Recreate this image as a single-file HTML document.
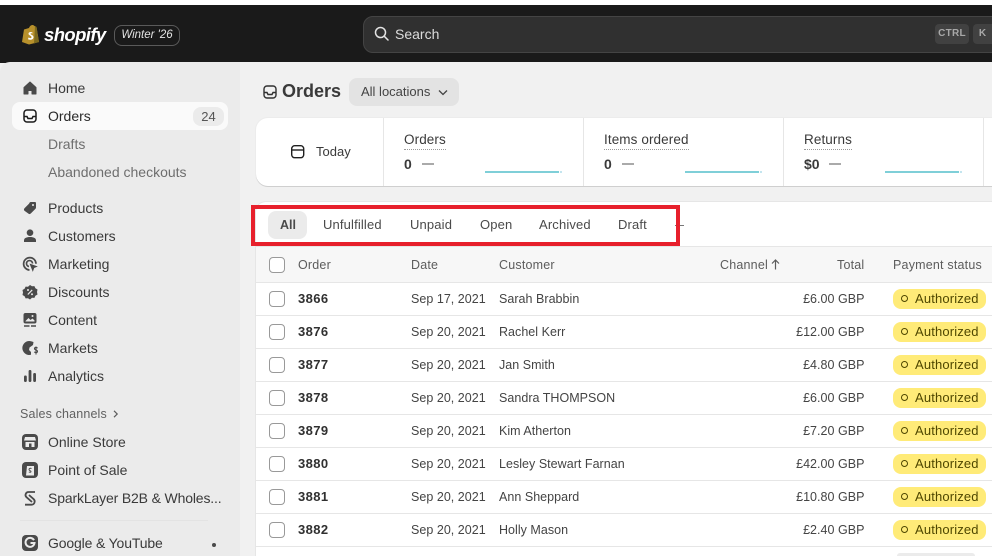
<!DOCTYPE html>
<html><head><meta charset="utf-8"><style>
html,body{margin:0;padding:0}
body{width:992px;height:556px;overflow:hidden;position:relative;background:#f1f1f1;font-family:"Liberation Sans",sans-serif;color:#303030;font-size:13px}
.a{position:absolute;white-space:nowrap}
.n{position:absolute;left:48px;height:20px;line-height:20px;font-size:14px;white-space:nowrap;color:#3a3a3a}
.s{color:#6e6e6e}
.i{position:absolute;left:21px;width:18px;height:18px}
.t{position:absolute;height:20px;line-height:20px;white-space:nowrap;font-size:13px;color:#4a4a4a;letter-spacing:.15px}
.h{position:absolute;top:255px;height:20px;line-height:20px;white-space:nowrap;font-size:12.5px;color:#5c5c5c;letter-spacing:.2px}
.r{position:absolute;left:256px;right:0;height:33px;background:#fff;border-bottom:1px solid #e6e6e6;box-sizing:border-box}
.r div{position:absolute;top:6px;height:20px;line-height:20px;white-space:nowrap;font-size:12.5px;color:#444;letter-spacing:.03px}
.r .c{left:13px;top:8px;width:14px;height:14px;border:1px solid #999;border-radius:4px;background:#fff}
.r .o{left:42px;font-weight:bold;color:#303030;font-size:13px;letter-spacing:.4px}
.r .d{left:155px}
.r .u{left:243px}
.r .m{right:127.500px}
.r .b{left:637px;top:6px;width:93px;height:20px;background:#ffeb78;border-radius:8px;color:#4f4700;line-height:20px}
.r .b i{position:absolute;left:8px;top:6px;width:5px;height:5px;border:1.5px solid #4f4700;border-radius:50%}
.r .b span{position:absolute;left:22px;font-size:13px;letter-spacing:.15px}
.lbl{position:absolute;top:131px;height:18px;line-height:18px;font-size:13.5px;color:#3a3a3a;border-bottom:1px dotted #999;letter-spacing:.1px}
.v{position:absolute;top:156px;line-height:17px;font-size:14px;font-weight:bold;color:#3a3a3a}
.ds{position:absolute;top:163px;width:12px;height:2px;background:#aaa}
.sp{position:absolute;top:171px;width:74px;height:2px;background:#7fcfd8}
.sp2{position:absolute;top:171px;width:2px;height:2px;background:#c4e5ef}
.dv{position:absolute;top:118px;width:1px;height:68px;background:#e6e6e6}
</style></head><body>
<div class="a" style="left:0;top:0;width:992px;height:5px;background:#fff"></div>
<div class="a" style="left:0;top:5px;width:992px;height:58px;background:#1a1a1a"></div>
<div class="a" style="left:0;top:62px;width:240px;height:494px;background:#ebebeb;border-top-left-radius:10px"></div>
<div class="a" style="left:240px;top:62px;width:752px;height:494px;background:#f1f1f1"></div>

<svg class="a" style="left:21px;top:24px" width="19" height="21" viewBox="0 0 19 21"><path d="M3 5.500 8 4c1-3 4-4 5.500-2l2 1 2.500 15-10 2.500L1 18z" fill="#b8912c"/><path d="M14 2l1.500 1 2.500 15-5 1.500z" fill="#7d6a1e"/><path d="M11.500 8.500c-2-1-4-.3-4 1.300 0 1.700 3 1.900 3 3.400 0 1-1.500 1.200-3 .3l-.5 1.800c2.500 1 5.500.3 5.500-2.200 0-2-3-2.300-3-3.300 0-.5 1-.8 2-.3z" fill="#fff"/></svg>
<div class="a" style="left:44px;top:21px;height:28px;line-height:28px;font-size:18.500px;font-weight:bold;font-style:italic;color:#fff;letter-spacing:-.6px">shopify</div>
<div class="a" style="left:114px;top:25px;width:64px;height:19px;border:1px solid #5a5a5a;border-radius:8px;line-height:19px;text-align:center;font-size:11.500px;font-style:italic;color:#e3e3e3">Winter '26</div>

<div class="a" style="left:363px;top:16px;width:640px;height:35px;background:#303030;border:1px solid #444;border-radius:10px"></div>
<svg class="a" style="left:374px;top:26px" width="15" height="15" viewBox="0 0 15 15" fill="none" stroke="#e3e3e3" stroke-width="1.500"><circle cx="6.500" cy="6.500" r="5"/><path d="M10.200 10.200 14 14" stroke-linecap="round"/></svg>
<div class="a" style="left:395px;top:24px;height:20px;line-height:20px;font-size:14px;color:#dcdcdc">Search</div>
<div class="a" style="left:935px;top:24px;width:34px;height:20px;background:#414141;border-radius:4px;line-height:20px;text-align:center;font-size:10px;font-weight:bold;color:#a8a8a8;letter-spacing:.3px">CTRL</div>
<div class="a" style="left:973px;top:24px;width:19px;height:20px;background:#414141;border-radius:4px 0 0 4px;line-height:20px;text-align:center;font-size:10px;font-weight:bold;color:#a8a8a8">K</div>

<!-- sidebar -->
<div class="a" style="left:12px;top:102px;width:216px;height:28px;background:#fafafa;border-radius:8px"></div>
<div class="a" style="left:193px;top:107px;width:31px;height:19px;background:#ebebeb;border-radius:8px;line-height:19px;text-align:center;font-size:13px;color:#555">24</div>

<svg class="i" style="top:79px" viewBox="0 0 18 18"><path d="M3 8.500 9 3l6 5.500V15h-4v-3.500H7V15H3z" fill="#4a4a4a" stroke="#4a4a4a" stroke-linejoin="round"/></svg>
<div class="n" style="top:78px">Home</div>
<svg class="i" style="top:107px" viewBox="0 0 18 18" fill="none" stroke="#1a1a1a" stroke-width="1.500"><rect x="3" y="3" width="12" height="12" rx="3"/><path d="M3 9.500h3l1 2h4l1-2h3"/></svg>
<div class="n" style="top:106px;color:#2a2a2a">Orders</div>
<div class="n s" style="top:134px">Drafts</div>
<div class="n s" style="top:162px">Abandoned checkouts</div>

<svg class="i" style="top:199px" viewBox="0 0 18 18"><path d="M9.500 3H14a1 1 0 0 1 1 1v4.500a2 2 0 0 1-.6 1.400l-4.500 4.500a2 2 0 0 1-2.800 0L3.600 11.900a2 2 0 0 1 0-2.800l4.500-4.500A2 2 0 0 1 9.500 3z" fill="#4a4a4a"/><circle cx="12" cy="6" r="1" fill="#ebebeb"/></svg>
<div class="n" style="top:198px">Products</div>
<svg class="i" style="top:227px" viewBox="0 0 18 18" fill="#4a4a4a"><circle cx="9" cy="5.700" r="3.300"/><path d="M3 15v-1.500C3 11 5.500 10 9 10s6 1 6 3.500V15z"/></svg>
<div class="n" style="top:226px">Customers</div>
<svg class="i" style="top:255px" viewBox="0 0 18 18" fill="none" stroke="#4a4a4a" stroke-width="1.700"><path d="M8.500 15a6.200 6.200 0 1 1 6.500-6.200"/><path d="M8 11.500a3 3 0 1 1 3.500-3"/><path d="M9 9l7 2.500-3 1.200-1.200 3.300z" fill="#4a4a4a" stroke-width=".6"/></svg>
<div class="n" style="top:254px">Marketing</div>
<svg class="i" style="top:283px" viewBox="0 0 18 18"><path d="M9 2l2 1.300 2.400-.2 1 2.200 2.100 1.200-.5 2.500.5 2.500-2.100 1.200-1 2.200-2.400-.2L9 16.500l-2-1.300-2.400.2-1-2.200-2.100-1.200.5-2.500-.5-2.500 2.100-1.200 1-2.200 2.400.2z" fill="#4a4a4a"/><path d="M6.800 11.500l4.400-4.600" stroke="#ebebeb" stroke-width="1.200"/><circle cx="7" cy="7" r="1" fill="#ebebeb"/><circle cx="11" cy="11.300" r="1" fill="#ebebeb"/></svg>
<div class="n" style="top:282px">Discounts</div>
<svg class="i" style="top:311px" viewBox="0 0 18 18"><rect x="2.500" y="2" width="13" height="10.500" rx="2" fill="#4a4a4a"/><path d="M4.500 10l3-3 2 2 2-1.500 2 2V10.500h-9z" fill="#ebebeb"/><circle cx="11.500" cy="5" r="1" fill="#ebebeb"/><path d="M3 15h5.500M10 15h5" stroke="#4a4a4a" stroke-width="1.400"/></svg>
<div class="n" style="top:310px">Content</div>
<svg class="i" style="top:339px" viewBox="0 0 18 18"><path d="M10 2.200a7 7 0 1 0 0 13.600V13l-2-2 .5-2.500L12 6l.5-3z" fill="#4a4a4a"/><path d="M16.500 9.200c-.5-1-3-1.200-3 .4 0 1.700 3 1 3 2.800 0 1.600-2.600 1.400-3.200.4M15 7.500v8" stroke="#4a4a4a" stroke-width="1.100" fill="none"/></svg>
<div class="n" style="top:338px">Markets</div>
<svg class="i" style="top:367px" viewBox="0 0 18 18" fill="#4a4a4a"><rect x="3" y="8.500" width="2.800" height="6.500" rx="1.200"/><rect x="7.600" y="3" width="2.800" height="12" rx="1.200"/><rect x="12.200" y="6" width="2.800" height="9" rx="1.200"/></svg>
<div class="n" style="top:366px">Analytics</div>

<div class="a" style="left:20px;top:404px;height:20px;line-height:20px;font-size:12.500px;color:#616161;letter-spacing:.15px">Sales channels</div>
<svg class="a" style="left:112px;top:410px" width="7" height="8" viewBox="0 0 7 8" fill="none" stroke="#5a5a5a" stroke-width="1.200"><path d="M2 .8 5.200 4 2 7.200"/></svg>

<svg class="i" style="top:433px;left:21px" viewBox="0 0 18 18"><rect x="1" y="1" width="16" height="16" rx="4" fill="#4a4a4a"/><path d="M4 4h10l1 3.500H3zM4.500 9h9v5h-9z" fill="#ebebeb"/><path d="M8 10.500h2.500V14H8z" fill="#4a4a4a"/></svg>
<div class="n" style="top:432px">Online Store</div>
<svg class="i" style="top:461px;left:21px" viewBox="0 0 18 18"><rect x="1" y="1" width="16" height="16" rx="4" fill="#4a4a4a"/><path d="M6 5h7v9.500H5z" fill="#ebebeb"/><path d="M10.500 7.500c-1.500-.6-2.500 0-2.500 1 0 1.200 2 1.100 2 2.100 0 .7-1 .8-2.200.3" stroke="#4a4a4a" fill="none"/></svg>
<div class="n" style="top:460px">Point of Sale</div>
<svg class="i" style="top:489px;left:21px" viewBox="0 0 18 18" fill="none" stroke="#4a4a4a" stroke-width="1.800"><path d="M14 3H7.500a3 3 0 0 0-2 5.200L11 13"/><path d="M8 6l4.700 4.200a3.200 3.200 0 0 1-2.200 5.500H4"/></svg>
<div class="n" style="top:488px;letter-spacing:-.15px">SparkLayer B2B &amp; Wholes...</div>
<div class="a" style="left:20px;top:520px;width:188px;height:1px;background:#e3e3e3"></div>
<svg class="i" style="top:534px;left:21px" viewBox="0 0 18 18"><rect x="1" y="1" width="16" height="16" rx="4" fill="#4a4a4a"/><path d="M13 6.200A4.500 4.500 0 1 0 13.500 9H9.500" fill="none" stroke="#ebebeb" stroke-width="2"/></svg>
<div class="n" style="top:533px;letter-spacing:-.15px">Google &amp; YouTube</div>
<div class="a" style="left:212px;top:543px;width:4px;height:4px;border-radius:50%;background:#4a4a4a"></div>

<!-- heading -->
<svg class="a" style="left:262px;top:84px" width="16" height="16" viewBox="0 0 16 16" fill="none" stroke="#303030" stroke-width="1.400"><rect x="2" y="2" width="12" height="12" rx="3"/><path d="M2 8.500h3l1 2h4l1-2h3"/></svg>
<div class="a" style="left:282px;top:79px;height:24px;line-height:24px;font-size:18px;font-weight:bold;color:#3a3a3a">Orders</div>
<div class="a" style="left:349px;top:78px;width:110px;height:28px;background:#e3e3e3;border-radius:8px"></div>
<div class="a" style="left:361px;top:82px;height:20px;line-height:20px;font-size:13px;color:#444">All locations</div>
<svg class="a" style="left:437px;top:89px" width="12" height="8" viewBox="0 0 12 8" fill="none" stroke="#444" stroke-width="1.300"><path d="M2 1.500l4 4 4-4"/></svg>

<!-- stats -->
<div class="a" style="left:256px;top:118px;width:760px;height:68px;background:#fff;border-radius:12px;box-shadow:0 1px 0 #cfcfcf,0 0 0 1px #ececec"></div>
<div class="dv" style="left:383px"></div><div class="dv" style="left:583px"></div><div class="dv" style="left:783px"></div><div class="dv" style="left:983px"></div>
<svg class="a" style="left:290px;top:144px" width="15" height="15" viewBox="0 0 15 15" fill="none" stroke="#1f1f1f" stroke-width="1.400"><rect x="1.700" y="1.700" width="12" height="12" rx="3"/><path d="M1.700 6h12"/></svg>
<div class="a" style="left:316px;top:142px;height:20px;line-height:20px;font-size:13px;color:#3a3a3a">Today</div>

<div class="lbl" style="left:404px">Orders</div><div class="v" style="left:404px">0</div><div class="ds" style="left:422px"></div><div class="sp" style="left:485px"></div><div class="sp2" style="left:560px"></div>
<div class="lbl" style="left:604px">Items ordered</div><div class="v" style="left:604px">0</div><div class="ds" style="left:622px"></div><div class="sp" style="left:685px"></div><div class="sp2" style="left:760px"></div>
<div class="lbl" style="left:804px">Returns</div><div class="v" style="left:804px">$0</div><div class="ds" style="left:829px"></div><div class="sp" style="left:885px"></div><div class="sp2" style="left:960px"></div>

<!-- table -->
<div class="a" style="left:256px;top:202px;width:736px;height:354px;background:#fff;border-top-left-radius:10px;box-shadow:0 0 0 1px #e6e6e6"></div>
<div class="a" style="left:268px;top:211px;width:39px;height:28px;background:#ebebeb;border-radius:8px"></div>
<div class="t" style="left:280px;top:215px;font-weight:bold;font-size:12.500px;letter-spacing:0">All</div>
<div class="t" style="left:323px;top:215px">Unfulfilled</div>
<div class="t" style="left:410px;top:215px">Unpaid</div>
<div class="t" style="left:480px;top:215px">Open</div>
<div class="t" style="left:539px;top:215px">Archived</div>
<div class="t" style="left:618px;top:215px">Draft</div>
<div class="a" style="left:675px;top:225px;width:9px;height:1px;background:#777"></div>
<div class="a" style="left:251px;top:205px;width:429px;height:41px;border:4px solid #e7202c;box-sizing:border-box"></div>

<div class="a" style="left:256px;top:246px;width:736px;height:37px;background:#f7f7f7;border-top:1px solid #e6e6e6;border-bottom:1px solid #e6e6e6;box-sizing:border-box"></div>
<div class="a" style="left:269px;top:257px;width:14px;height:14px;border:1px solid #999;border-radius:4px;background:#fff"></div>
<div class="h" style="left:298px">Order</div>
<div class="h" style="left:411px">Date</div>
<div class="h" style="left:499px">Customer</div>
<div class="h" style="left:720px">Channel</div>
<svg class="a" style="left:771px;top:259px" width="9" height="11" viewBox="0 0 9 11" fill="none" stroke="#5c5c5c" stroke-width="1.200"><path d="M4.500 10.500V1M1 4.500 4.500 1 8 4.500"/></svg>
<div class="h" style="left:837px">Total</div>
<div class="h" style="left:893px">Payment status</div>

<div class="r" style="top:283px"><div class="c"></div><div class="o">3866</div><div class="d">Sep 17, 2021</div><div class="u">Sarah Brabbin</div><div class="m">£6.00 GBP</div><div class="b"><i></i><span>Authorized</span></div></div>
<div class="r" style="top:316px"><div class="c"></div><div class="o">3876</div><div class="d">Sep 20, 2021</div><div class="u">Rachel Kerr</div><div class="m">£12.00 GBP</div><div class="b"><i></i><span>Authorized</span></div></div>
<div class="r" style="top:349px"><div class="c"></div><div class="o">3877</div><div class="d">Sep 20, 2021</div><div class="u">Jan Smith</div><div class="m">£4.80 GBP</div><div class="b"><i></i><span>Authorized</span></div></div>
<div class="r" style="top:382px"><div class="c"></div><div class="o">3878</div><div class="d">Sep 20, 2021</div><div class="u">Sandra THOMPSON</div><div class="m">£6.00 GBP</div><div class="b"><i></i><span>Authorized</span></div></div>
<div class="r" style="top:415px"><div class="c"></div><div class="o">3879</div><div class="d">Sep 20, 2021</div><div class="u">Kim Atherton</div><div class="m">£7.20 GBP</div><div class="b"><i></i><span>Authorized</span></div></div>
<div class="r" style="top:448px"><div class="c"></div><div class="o">3880</div><div class="d">Sep 20, 2021</div><div class="u">Lesley Stewart Farnan</div><div class="m">£42.00 GBP</div><div class="b"><i></i><span>Authorized</span></div></div>
<div class="r" style="top:481px"><div class="c"></div><div class="o">3881</div><div class="d">Sep 20, 2021</div><div class="u">Ann Sheppard</div><div class="m">£10.80 GBP</div><div class="b"><i></i><span>Authorized</span></div></div>
<div class="r" style="top:514px"><div class="c"></div><div class="o">3882</div><div class="d">Sep 20, 2021</div><div class="u">Holly Mason</div><div class="m">£2.40 GBP</div><div class="b"><i></i><span>Authorized</span></div></div>
<div class="a" style="left:897px;top:553px;width:78px;height:3px;background:#ebebeb;border-radius:4px 4px 0 0"></div>
</body></html>
